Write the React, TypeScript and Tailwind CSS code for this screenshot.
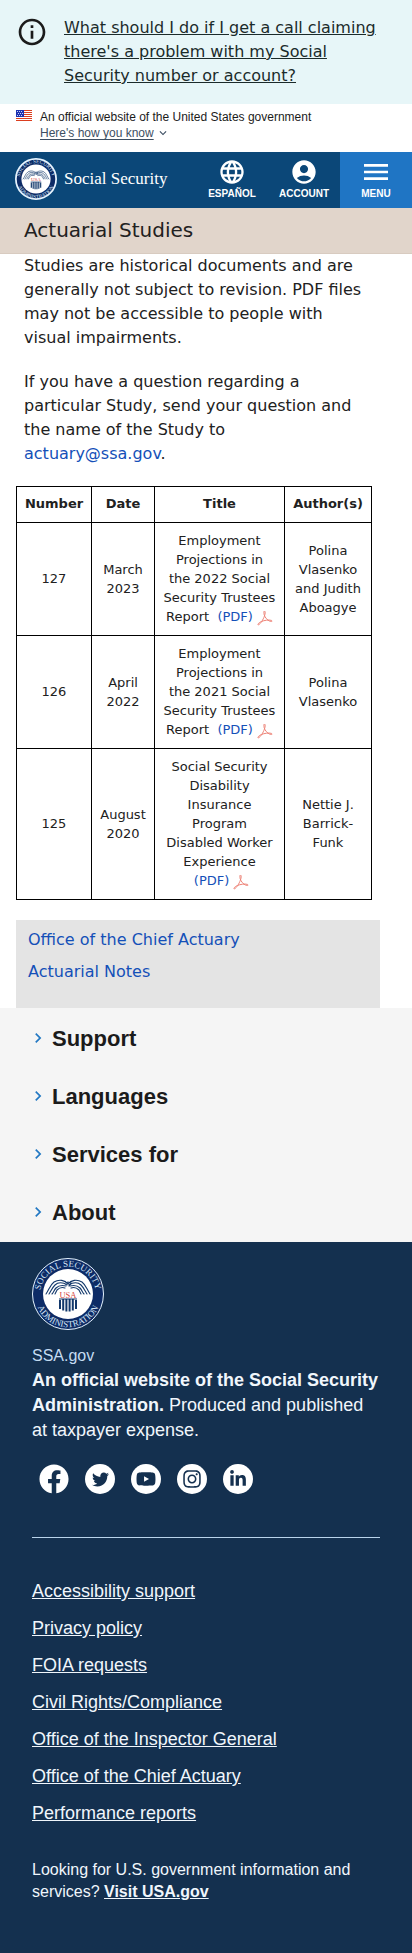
import type { ReactNode } from "react";
import {
  MdAccountCircle,
  MdExpandMore,
  MdInfoOutline,
  MdLanguage,
  MdMenu,
  MdNavigateNext,
} from "react-icons/md";
import { FaFacebook, FaInstagram, FaLinkedinIn, FaTwitter, FaYoutube } from "react-icons/fa";

type Study = { number: string; date: string; title: string; authors: string };

const studies: Study[] = [
  {
    number: "127",
    date: "March 2023",
    title: "Employment Projections in\nthe 2022 Social Security Trustees Report",
    authors: "Polina Vlasenko and Judith Aboagye",
  },
  {
    number: "126",
    date: "April 2022",
    title: "Employment Projections in\nthe 2021 Social Security Trustees Report",
    authors: "Polina Vlasenko",
  },
  {
    number: "125",
    date: "August 2020",
    title: "Social Security Disability Insurance Program Disabled Worker Experience",
    authors: "Nettie J. Barrick-Funk",
  },
];

const sections = ["Support", "Languages", "Services for", "About"];

const footerLinks = [
  "Accessibility support",
  "Privacy policy",
  "FOIA requests",
  "Civil Rights/Compliance",
  "Office of the Inspector General",
  "Office of the Chief Actuary",
  "Performance reports",
];

function Seal({ id, ring, className }: { id: string; ring: number; className: string }) {
  return (
    <svg viewBox="0 0 72 72" className={className} role="img" aria-label="Social Security Administration seal">
      <defs>
        <path id={`${id}-top`} d="M8.200 39a27.900 27.900 0 1 1 55.600 0" />
        <path id={`${id}-bottom`} d="M2.800 36a33.200 33.200 0 0 0 66.400 0" />
      </defs>
      <circle cx="36" cy="36" r={36 - ring / 2} fill="#0d2b66" stroke="#e6f4ff" strokeWidth={ring} />
      <circle cx="36" cy="36" r="25" fill="#fff" />
      <g fill="#d5e6f7" fontFamily="Liberation Serif, serif" fontSize="9">
        <text textAnchor="middle">
          <textPath href={`#${id}-top`} startOffset="50%">SOCIAL SECURITY</textPath>
        </text>
        <text textAnchor="middle">
          <textPath href={`#${id}-bottom`} startOffset="50%">ADMINISTRATION</textPath>
        </text>
      </g>
      <g fill="none" stroke="#12386b" strokeWidth="1.1" strokeLinecap="round">
        <path d="M36 26c-3-4-9-5-14-2-4 3-5 8-8 12" />
        <path d="M35 27c-4-3-9-3-12 0-3 3-4 6-6 9" />
        <path d="M34 28c-4-1-7-1-10 2-2 2-2 4-4 6" />
        <path d="M33 30c-3-1-6 0-8 2l-2 4" />
        <path d="M36 26c3-4 9-5 14-2 4 3 5 8 8 12" />
        <path d="M37 27c4-3 9-3 12 0 3 3 4 6 6 9" />
        <path d="M38 28c4-1 7-1 10 2 2 2 2 4 4 6" />
        <path d="M39 30c3-1 6 0 8 2l2 4" />
        <path d="M34 25l2-1 3 1-2 3" />
      </g>
      <text x="36" y="39.5" textAnchor="middle" fontFamily="Liberation Serif, serif" fontSize="8.5" fill="#d6453d">
        USA
      </text>
      <path
        d="M28 42v9M31.2 41v11.5M34.4 41v12.5M37.6 41v12.5M40.8 41v11.5M44 42v9"
        stroke="#12386b"
        strokeWidth="2"
      />
      <path d="M27 41h18" stroke="#12386b" strokeWidth="1" />
    </svg>
  );
}

function Flag() {
  return (
    <svg viewBox="0 0 16 11" className="mt-[1px] h-[11px] w-4 shrink-0" aria-hidden="true">
      <rect width="16" height="11" fill="#fff" />
      <path d="M0 .5h16M0 2.5h16M0 4.5h16M0 6.5h16M0 8.5h16M0 10.5h16" stroke="#db3e1f" />
      <rect width="8" height="7" fill="#1e33b1" />
      <path d="M1 1.5h6M2 3.5h5M1 5.5h6" stroke="#c9d0f5" strokeDasharray="1 1" />
    </svg>
  );
}

function PdfIcon() {
  return (
    <svg viewBox="0 0 16 16" className="ml-1 inline-block size-4 align-[-5px]" fill="none" stroke="#ee8377" aria-hidden="true">
      <path d="M7.4 1c1.2.3.8 3.200 0 5.200C6.200 9.500 3.600 14 1.400 14.800c-1.400.2 0-2 2.800-3.200 3.200-1.400 7.800-2 10.200-1.200 1.600.8.2 1.600-1.600.8C10.400 10.200 8 7.600 7.200 4.800 6.800 3 6.700 1.400 7.400 1z" />
    </svg>
  );
}

function BlueLink({ children }: { children: ReactNode }) {
  return (
    <a href="#" className="text-[#1450b8]">
      {children}
    </a>
  );
}

function HeaderLink({ icon, label }: { icon: ReactNode; label: string }) {
  return (
    <a href="#" className="flex w-[72px] flex-col items-center pt-[6px] text-[10px] leading-4 font-bold text-white">
      {icon}
      {label}
    </a>
  );
}

function SocialDisc({ label, children }: { label: string; children: ReactNode }) {
  return (
    <a
      href="#"
      aria-label={label}
      className="flex size-[30px] items-center justify-center rounded-full bg-white text-[#14304f]"
    >
      {children}
    </a>
  );
}

export default function App() {
  return (
    <div className="min-h-screen bg-white font-['DejaVu_Sans',sans-serif] text-[#212121]">
      <aside className="flex gap-4 bg-[#e7f6f8] p-4">
        <MdInfoOutline className="size-8 shrink-0 text-[#1b1b1b]" />
        <a href="#" className="text-base leading-6 text-[#1b2b2b] underline">
          What should I do if I get a call claiming there's a problem with my Social Security number or account?
        </a>
      </aside>

      <div className="flex gap-2 px-4 pt-[5px] pb-[11px] font-['Liberation_Sans',sans-serif] text-xs leading-4">
        <Flag />
        <div>
          <p className="text-[#1b1b1b]">An official website of the United States government</p>
          <button type="button" className="flex items-center text-[#3d4f63]">
            <span className="underline underline-offset-2">Here's how you know</span>
            <MdExpandMore className="ml-[2px] size-[14px]" />
          </button>
        </div>
      </div>

      <header className="flex h-14 bg-[#0b4778] font-['Liberation_Sans',sans-serif]">
        <a href="#" className="flex grow items-center gap-[7px] pb-[2px] pl-[15px] text-white">
          <Seal id="header-seal" ring={3} className="size-[42px] shrink-0" />
          <span className="font-['Liberation_Serif',serif] text-[17px] whitespace-nowrap">Social Security</span>
        </a>
        <HeaderLink icon={<MdLanguage className="size-7" />} label="ESPAÑOL" />
        <HeaderLink icon={<MdAccountCircle className="size-7" />} label="ACCOUNT" />
        <button
          type="button"
          className="flex w-[72px] flex-col items-center bg-[#1f75c4] pt-1 text-[10px] leading-4 font-bold text-white"
        >
          <MdMenu className="-mb-[2px] size-8" />
          MENU
        </button>
      </header>

      <main>
        <h1 className="border-b border-[#d8cbc0] bg-[#e1d5cb] px-6 py-[9px] text-xl leading-[27px]">Actuarial Studies</h1>
        <div className="space-y-5 pr-10 pl-6 text-base leading-6">
          <p>
            Studies are historical documents and are generally not subject to revision. PDF files may not be accessible
            to people with visual impairments.
          </p>
          <p>
            If you have a question regarding a particular Study, send your question and the name of the Study to
            <br />
            <BlueLink>actuary@ssa.gov</BlueLink>.
          </p>
        </div>

        <div className="px-4 pt-5">
          <table className="w-[356px] table-fixed border-collapse text-center text-[13px] leading-[19px]">
            <colgroup>
              <col className="w-[75px]" />
              <col className="w-[63px]" />
              <col className="w-[130px]" />
              <col className="w-[87px]" />
            </colgroup>
            <thead>
              <tr className="h-9">
                {["Number", "Date", "Title", "Author(s)"].map((name) => (
                  <th key={name} scope="col" className="border border-black pb-[2px] font-bold">
                    {name}
                  </th>
                ))}
              </tr>
            </thead>
            <tbody>
              {studies.map((study) => (
                <tr key={study.number}>
                  <td className="border border-black px-2 pt-2 pb-[9px]">{study.number}</td>
                  <td className="border border-black px-2 pt-2 pb-[9px]">{study.date}</td>
                  <td className="border border-black px-2 pt-2 pb-[9px]">
                    <span className="whitespace-pre-line">{study.title}</span> &nbsp;
                    <span className="whitespace-nowrap">
                      <BlueLink>
                        (PDF)
                        <PdfIcon />
                      </BlueLink>
                    </span>
                  </td>
                  <td className="border border-black px-2 pt-2 pb-[9px]">{study.authors}</td>
                </tr>
              ))}
            </tbody>
          </table>
        </div>

        <nav className="mt-5 mr-8 ml-4 flex flex-col gap-2 bg-[#e4e4e4] px-3 pt-2 pb-6 text-base leading-6">
          <BlueLink>Office of the Chief Actuary</BlueLink>
          <BlueLink>Actuarial Notes</BlueLink>
        </nav>
      </main>

      <section className="bg-[#f5f5f5] py-px font-['Liberation_Sans',sans-serif] text-[#1b1b1b]">
        {sections.map((name) => (
          <h2 key={name}>
            <button type="button" className="flex h-[58px] w-full items-center px-7 text-[22px] font-bold">
              <MdNavigateNext className="mr-1 size-5 text-[#2378c3]" />
              {name}
            </button>
          </h2>
        ))}
      </section>

      <footer className="bg-[#14304f] px-8 pt-4 pb-[50px] font-['Liberation_Sans',sans-serif] text-[#f0f6fc]">
        <Seal id="footer-seal" ring={1} className="size-[72px]" />
        <p className="pt-[14px] text-base leading-6 text-[#c5dcf2]">SSA.gov</p>
        <p className="-mr-2 text-lg leading-[25px]">
          <strong>An official website of the Social Security Administration.</strong> Produced and published
          <br />
          at taxpayer expense.
        </p>
        <div className="mt-[21px] flex gap-4 pl-[7px]">
          <a href="#" aria-label="Facebook" className="text-white">
            <FaFacebook className="size-[30px]" />
          </a>
          <SocialDisc label="Twitter">
            <FaTwitter className="size-[17px]" />
          </SocialDisc>
          <SocialDisc label="YouTube">
            <FaYoutube className="size-5" />
          </SocialDisc>
          <SocialDisc label="Instagram">
            <FaInstagram className="size-5" />
          </SocialDisc>
          <SocialDisc label="LinkedIn">
            <FaLinkedinIn className="size-[18px]" />
          </SocialDisc>
        </div>
        <hr className="mt-[43px] border-[#b9d3ea]" />
        <ul className="space-y-[17px] pt-[43px] text-lg leading-5">
          {footerLinks.map((name) => (
            <li key={name}>
              <a href="#" className="underline">
                {name}
              </a>
            </li>
          ))}
        </ul>
        <p className="pt-9 text-base leading-[22px]">
          Looking for U.S. government information and services?{" "}
          <a href="#" className="font-bold underline">
            Visit USA.gov
          </a>
        </p>
      </footer>
    </div>
  );
}
